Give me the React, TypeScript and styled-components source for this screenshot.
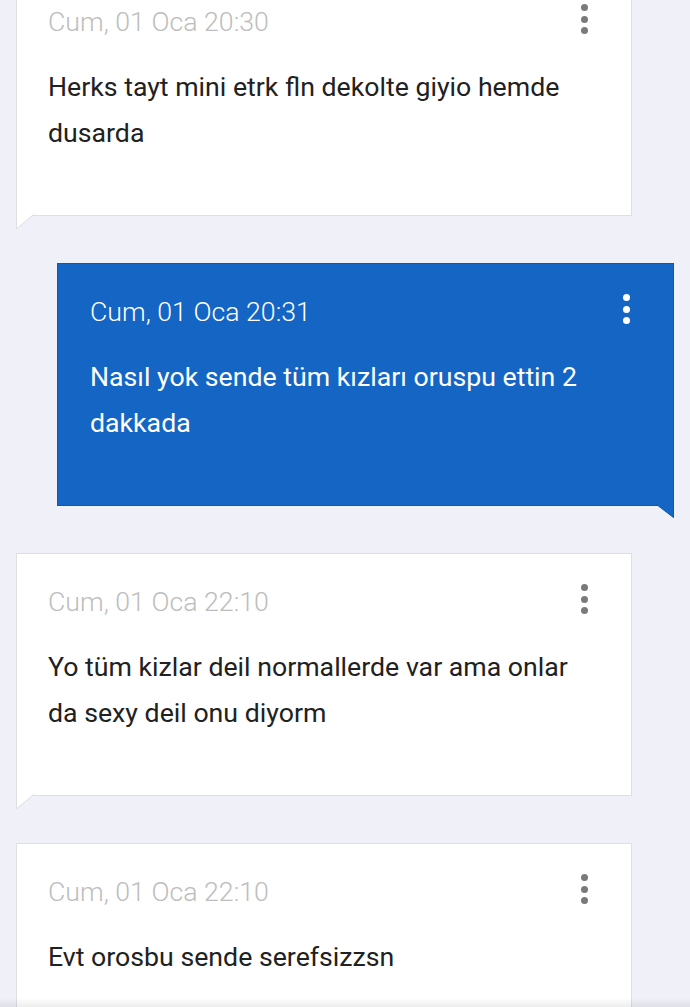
import React from "react";
import styled, { createGlobalStyle } from "styled-components";

const GlobalStyle = createGlobalStyle`
  html, body {
    margin: 0;
    padding: 0;
    background: #f0f1f8;
    font-family: Roboto, "Noto Sans", "Liberation Sans", sans-serif;
    overflow: hidden;
  }
`;

const Page = styled.div`
  width: 690px;
  height: 1007px;
  overflow: hidden;
  background: #f0f1f8;
`;

const List = styled.div`
  display: flex;
  flex-direction: column;
  gap: 47px;
  margin-top: -27px;
`;

const Bubble = styled.div<{ $mine?: boolean }>`
  position: relative;
  box-sizing: border-box;
  width: ${(p) => (p.$mine ? "617px" : "616px")};
  margin-left: ${(p) => (p.$mine ? "57px" : "16px")};
  min-height: 243px;
  padding: 30px 43px 59px ${(p) => (p.$mine ? "32px" : "31px")};
  background: ${(p) => (p.$mine ? "#1565c4" : "#ffffff")};
  border: 1px solid ${(p) => (p.$mine ? "#0f58b0" : "#dedfe3")};
  color: ${(p) => (p.$mine ? "#ffffff" : "#212121")};
`;

const Header = styled.div`
  display: flex;
  justify-content: space-between;
  align-items: flex-start;
`;

const Stamp = styled.div<{ $mine?: boolean }>`
  font-size: 26.7px;
  line-height: 36px;
  font-weight: 300;
  color: ${(p) => (p.$mine ? "#ffffff" : "#bdbdbd")};
`;

const Dots = styled.div`
  display: flex;
  flex-direction: column;
  gap: 4.5px;
`;

const Dot = styled.span<{ $mine?: boolean }>`
  width: 7px;
  height: 7px;
  border-radius: 50%;
  background: ${(p) => (p.$mine ? "#ffffff" : "#7a7a7a")};
`;

const Body = styled.p`
  margin: 24px 0 0;
  font-size: 26.7px;
  line-height: 46px;
  font-weight: 400;
  max-width: 540px;
`;

const TailSvg = styled.svg<{ $mine?: boolean }>`
  position: absolute;
  top: calc(100% - 1px);
  ${(p) => (p.$mine ? "right: -1px;" : "left: -1px;")}
  overflow: visible;
`;

const BottomShade = styled.div`
  position: fixed;
  left: 0;
  right: 0;
  bottom: 0;
  height: 9px;
  background: linear-gradient(to bottom, rgba(0, 0, 0, 0), rgba(0, 0, 0, 0.07));
  pointer-events: none;
`;

type Msg = { stamp: string; text: string; mine?: boolean };

const messages: Msg[] = [
  { stamp: "Cum, 01 Oca 20:30", text: "Herks tayt mini etrk fln dekolte giyio hemde dusarda" },
  { stamp: "Cum, 01 Oca 20:31", text: "Nasıl yok sende tüm kızları oruspu ettin 2 dakkada", mine: true },
  { stamp: "Cum, 01 Oca 22:10", text: "Yo tüm kizlar deil normallerde var ama onlar da sexy deil onu diyorm" },
  { stamp: "Cum, 01 Oca 22:10", text: "Evt orosbu sende serefsizzsn" },
];

const Tail: React.FC<{ mine?: boolean }> = ({ mine }) =>
  mine ? (
    <TailSvg $mine width="18" height="15" viewBox="0 0 18 15">
      <polygon points="0,0 18,0 18,14" fill="#1565c4" />
      <polyline points="0.5,0.5 17.5,13.5 17.5,0" fill="none" stroke="#0f58b0" strokeWidth="1" />
    </TailSvg>
  ) : (
    <TailSvg width="18" height="16" viewBox="0 0 18 16">
      <polygon points="0,0 18,0 0,15" fill="#ffffff" />
      <polyline points="0.5,0 0.5,15 17.5,0.5 18,0.5" fill="none" stroke="#dedfe3" strokeWidth="1" />
    </TailSvg>
  );

export default function App() {
  return (
    <Page>
      <GlobalStyle />
      <List>
        {messages.map((m, i) => (
          <Bubble key={i} $mine={m.mine}>
            <Header>
              <Stamp $mine={m.mine}>{m.stamp}</Stamp>
              <Dots>
                <Dot $mine={m.mine} />
                <Dot $mine={m.mine} />
                <Dot $mine={m.mine} />
              </Dots>
            </Header>
            <Body>{m.text}</Body>
            <Tail mine={m.mine} />
          </Bubble>
        ))}
      </List>
      <BottomShade />
    </Page>
  );
}
